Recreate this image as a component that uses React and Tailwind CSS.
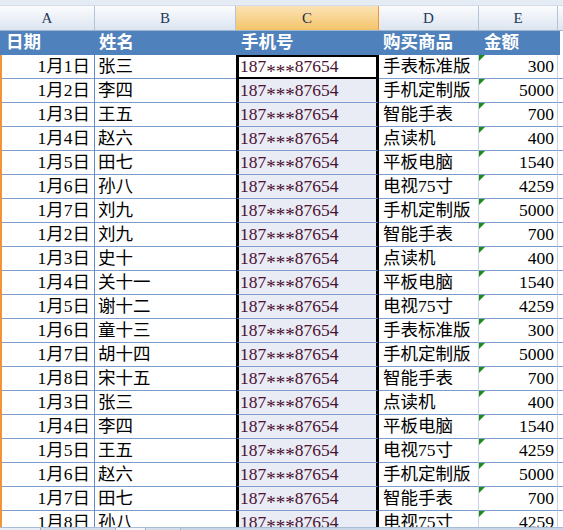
import React from "react";

const rows = [
  ["1月1日", "张三", "手表标准版", 300],
  ["1月2日", "李四", "手机定制版", 5000],
  ["1月3日", "王五", "智能手表", 700],
  ["1月4日", "赵六", "点读机", 400],
  ["1月5日", "田七", "平板电脑", 1540],
  ["1月6日", "孙八", "电视75寸", 4259],
  ["1月7日", "刘九", "手机定制版", 5000],
  ["1月2日", "刘九", "智能手表", 700],
  ["1月3日", "史十", "点读机", 400],
  ["1月4日", "关十一", "平板电脑", 1540],
  ["1月5日", "谢十二", "电视75寸", 4259],
  ["1月6日", "童十三", "手表标准版", 300],
  ["1月7日", "胡十四", "手机定制版", 5000],
  ["1月8日", "宋十五", "智能手表", 700],
  ["1月3日", "张三", "点读机", 400],
  ["1月4日", "李四", "平板电脑", 1540],
  ["1月5日", "王五", "电视75寸", 4259],
  ["1月6日", "赵六", "手机定制版", 5000],
  ["1月7日", "田七", "智能手表", 700],
  ["1月8日", "孙八", "电视75寸", 4259],
];

const font = { fontFamily: "'Liberation Serif', 'Noto Sans CJK SC', serif" };

function ColHead({ label, w, active }) {
  return (
    <div
      className={
        "flex items-center justify-center border-r text-[15px] " +
        w +
        (active
          ? " bg-gradient-to-b from-[#fbe3b4] to-[#f3c469] border-[#f29536] text-[#1d2d4a]"
          : " bg-gradient-to-b from-[#fbfcfe] to-[#dde5f0] border-[#b3c4d9] text-[#233a5c]")
      }
    >
      {label}
    </div>
  );
}

export default function App() {
  return (
    <div
      className="h-[530px] w-[563px] overflow-hidden flex flex-col bg-white"
      style={font}
    >
      {/* top strip */}
      <div className="h-[6px] shrink-0 bg-[#e6ecf4] border-b border-[#d3dce8]" />
      {/* column headers */}
      <div className="h-[25px] shrink-0 flex border-b border-[#9eb6ce]">
        <ColHead label="A" w="w-[95px]" />
        <ColHead label="B" w="w-[141px]" />
        <ColHead label="C" w="w-[143px]" active />
        <ColHead label="D" w="w-[100px]" />
        <ColHead label="E" w="w-[79px]" />
        <div className="flex-1 bg-gradient-to-b from-[#fbfcfe] to-[#dde5f0]" />
      </div>
      {/* title row */}
      <div className="h-[24px] shrink-0 flex text-white font-bold text-[17.5px] leading-none">
        <div className="w-[95px] bg-[#4f81bd] flex items-center pl-[6px]">日期</div>
        <div className="w-[141px] bg-[#4f81bd] flex items-center pl-[4px]">姓名</div>
        <div className="w-[143px] bg-[#4f81bd] flex items-center pl-[5px]">手机号</div>
        <div className="w-[100px] bg-[#4f81bd] flex items-center pl-[4px]">购买商品</div>
        <div className="w-[81px] bg-[#4f81bd] flex items-center pl-[5px]">金额</div>
        <div className="flex-1 bg-white" />
      </div>
      {/* data */}
      <div className="flex-1 overflow-hidden">
        {rows.map((r, i) => {
          const active = i === 0;
          return (
            <div
              key={i}
              className="h-[24px] flex text-[17.5px] leading-none text-black"
            >
              <div className="w-[2px] bg-[#f29436] border-b border-[#f29436]" />
              <div className="w-[93px] flex items-center justify-end pr-[4px] border-r border-b border-r-[#5f8ac6] border-b-[#7c9dcd]">
                {r[0]}
              </div>
              <div className="w-[141px] flex items-center pl-[3px] border-b border-[#7c9dcd]">
                {r[1]}
              </div>
              <div
                className={
                  "w-[143px] flex items-center pl-[1px] border-l-[3px] border-r-[3px] border-l-black border-r-black text-[#4a1232] " +
                  (active
                    ? "bg-white border-t-2 border-b-2 border-t-black border-b-black"
                    : "bg-[#e9ebf5] border-b border-b-[#7c9dcd]")
                }
              >
                187<span className="relative top-[4px] text-[19px]">***</span>87654
              </div>
              <div className="w-[100px] flex items-center pl-[4px] border-r border-b border-r-[#c9d3e3] border-b-[#7c9dcd]">
                {r[2]}
              </div>
              <div className="relative w-[79px] flex items-center justify-end pr-[3px] border-r border-b border-r-[#c9d3e3] border-b-[#7c9dcd]">
                <span className="absolute left-0 top-0 w-0 h-0 border-t-[6px] border-t-[#1a8a1a] border-r-[6px] border-r-transparent" />
                {r[3]}
              </div>
              <div className="flex-1 border-b border-[#7c9dcd]" />
            </div>
          );
        })}
      </div>
      {/* bottom tab strip */}
      <div className="h-[3px] shrink-0 flex bg-[#d5dfec] border-t border-[#a9bdd6]">
        <div className="w-[40px] bg-[#e8eef6]" />
        <div className="w-[75px] border-l border-[#9fb3cc]" />
        <div className="w-[30px] bg-[#f2f5fa] border-l border-[#9fb3cc]" />
        <div className="w-[35px] border-l border-[#9fb3cc]" />
        <div className="flex-1 bg-[#c8d6e8] border-l border-[#9fb3cc]" />
      </div>
    </div>
  );
}
